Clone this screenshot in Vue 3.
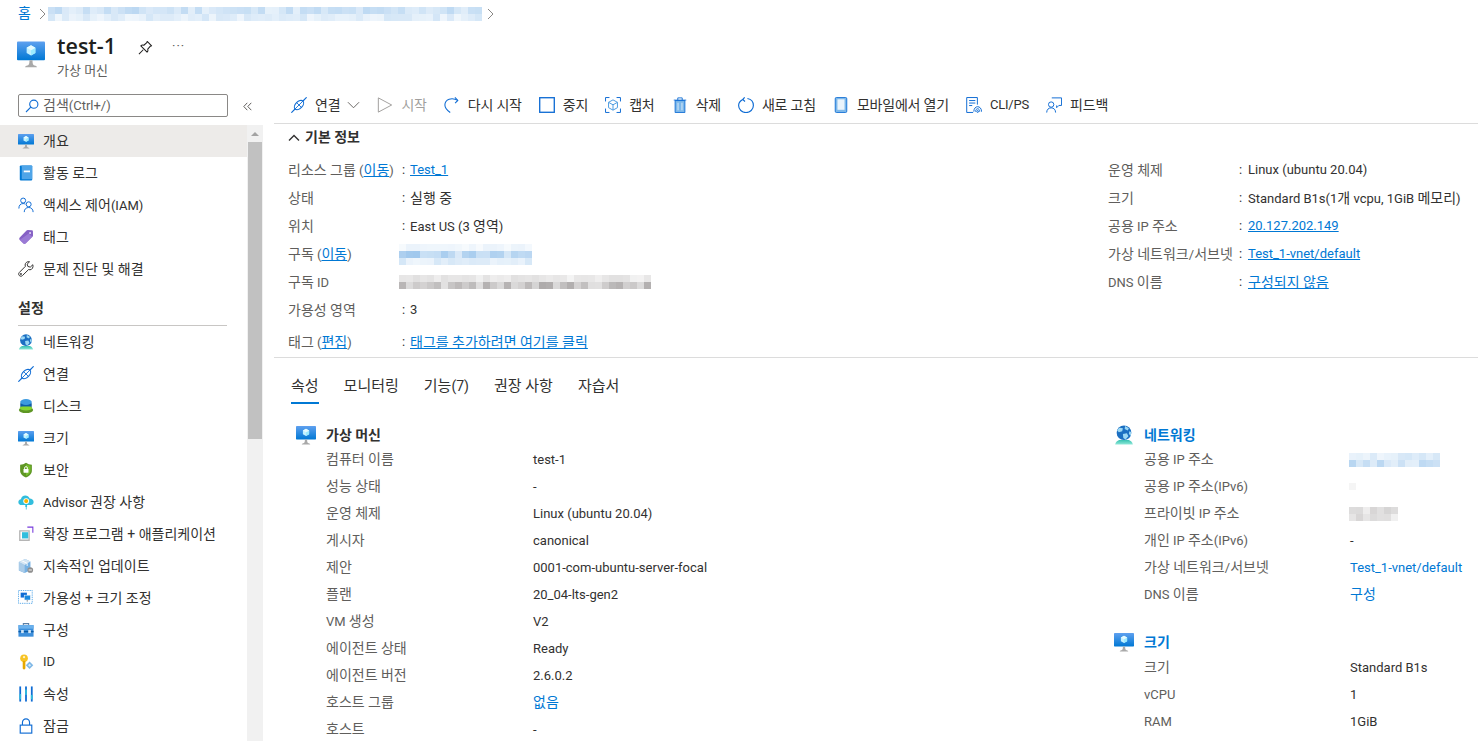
<script setup>
import { h } from 'vue'

function build(seed, cols, rows, rgb, strengths) {
  let s = seed
  const cells = []
  for (let r = 0; r < rows; r++) {
    for (let c = 0; c < cols; c++) {
      s = (s * 9301 + 49297) % 233280
      const a = strengths[r] * (0.35 + 0.65 * (s / 233280))
      cells.push(`rgba(${rgb},${a.toFixed(2)})`)
    }
  }
  return { cols, cells }
}

const Mosaic = (props) =>
  h('span', { class: 'mosaic', style: { gridTemplateColumns: `repeat(${props.data.cols}, 7px)` } },
    props.data.cells.map((c) => h('i', { style: { background: c } })))
Mosaic.props = ['data']

// Hangul runs are set a little larger than Latin, as the original UI font pairing does.
const T = (props) =>
  String(props.s)
    .split(/([가-힣]+(?:(?: | \+ )[가-힣]+)*)/)
    .map((x, i) => (i % 2 ? h('span', { class: 'ko' }, x) : x))
T.props = ['s']

const blue = '100,165,225'
const grey = '120,115,115'
const mCrumb = build(11, 62, 2, blue, [0.44, 0.28])
const mSub = build(23, 19, 3, blue, [0.14, 0.62, 0.28])
const mSubId = build(37, 36, 2, grey, [0.22, 0.6])
const mPub = build(51, 13, 2, blue, [0.28, 0.48])
const mV6 = build(3, 1, 1, grey, [0.12])
const mPriv = build(61, 7, 2, grey, [0.32, 0.3])

const navTop = [
  { t: '개요', i: 'vm', active: true },
  { t: '활동 로그', i: 'log' },
  { t: '액세스 제어(IAM)', i: 'iam' },
  { t: '태그', i: 'tag' },
  { t: '문제 진단 및 해결', i: 'wrench' },
]
const navSet = [
  { t: '네트워킹', i: 'net' },
  { t: '연결', i: 'plug' },
  { t: '디스크', i: 'disk' },
  { t: '크기', i: 'vm' },
  { t: '보안', i: 'shield' },
  { t: 'Advisor 권장 사항', i: 'advisor' },
  { t: '확장 프로그램 + 애플리케이션', i: 'ext' },
  { t: '지속적인 업데이트', i: 'update' },
  { t: '가용성 + 크기 조정', i: 'scale' },
  { t: '구성', i: 'config' },
  { t: 'ID', i: 'id' },
  { t: '속성', i: 'props' },
  { t: '잠금', i: 'lock' },
]
const tools = [
  { t: '연결', i: 'plug', chev: true },
  { t: '시작', i: 'play', off: true },
  { t: '다시 시작', i: 'restart' },
  { t: '중지', i: 'stop' },
  { t: '캡처', i: 'capture' },
  { t: '삭제', i: 'trash' },
  { t: '새로 고침', i: 'refresh' },
  { t: '모바일에서 열기', i: 'mobile' },
  { t: 'CLI/PS', i: 'cli' },
  { t: '피드백', i: 'feedback' },
]
const essRight = [
  { k: '운영 체제', v: 'Linux (ubuntu 20.04)' },
  { k: '크기', v: 'Standard B1s(1개 vcpu, 1GiB 메모리)' },
  { k: '공용 IP 주소', v: '20.127.202.149', link: true },
  { k: '가상 네트워크/서브넷', v: 'Test_1-vnet/default', link: true },
  { k: 'DNS 이름', v: '구성되지 않음', link: true },
]
const tabs = ['속성', '모니터링', '기능(7)', '권장 사항', '자습서']
const vmProps = [
  ['컴퓨터 이름', 'test-1'],
  ['성능 상태', '-'],
  ['운영 체제', 'Linux (ubuntu 20.04)'],
  ['게시자', 'canonical'],
  ['제안', '0001-com-ubuntu-server-focal'],
  ['플랜', '20_04-lts-gen2'],
  ['VM 생성', 'V2'],
  ['에이전트 상태', 'Ready'],
  ['에이전트 버전', '2.6.0.2'],
  ['호스트 그룹', '없음', true],
  ['호스트', '-'],
]
const sizeProps = [
  ['크기', 'Standard B1s'],
  ['vCPU', '1'],
  ['RAM', '1GiB'],
]
</script>

<template>
  <div class="page">
    <svg class="defs" width="0" height="0">
      <defs>
        <linearGradient id="g-vm" x1="0" y1="0" x2="0" y2="1"><stop offset="0" stop-color="#5ea0ef" /><stop offset="1" stop-color="#0078d4" /></linearGradient>
        <linearGradient id="g-net" x1="0" y1="0" x2="0" y2="1"><stop offset="0" stop-color="#37c2b1" /><stop offset="1" stop-color="#8fe8d8" /></linearGradient>
        <symbol id="i-vm" viewBox="0 0 18 18">
          <rect x="0" y="1" width="18" height="12" rx=".6" fill="url(#g-vm)" />
          <path d="M11.900 16.600c-1.800-.3-1.900-1.500-1.900-3.600H8c0 2.100-.1 3.300-1.900 3.600a1 1 0 0 0-.9.9h7.600a1 1 0 0 0-.9-.9z" fill="#a9a9a9" />
          <path d="M9 3.400l2.800 1.600v3.300L9 9.900 6.200 8.300V5z" fill="#c3f1ff" />
          <path d="M9 6.600l2.800-1.600v3.300L9 9.900z" fill="#9cebff" />
          <path d="M9 6.600L6.200 5 9 3.400 11.800 5z" fill="#e6fbff" />
        </symbol>
        <symbol id="i-log" viewBox="0 0 18 18">
          <rect x="2" y="0.500" width="14" height="17" rx="1.200" fill="#0078d4" />
          <rect x="4.200" y="0.500" width="11.800" height="15.400" rx=".8" fill="#50a5e8" />
          <rect x="6.500" y="6.200" width="7" height="2" fill="#fff" />
        </symbol>
        <symbol id="i-iam" viewBox="0 0 18 18" fill="none" stroke="#0f6cd4" stroke-width="1.100">
          <circle cx="5.800" cy="4" r="2.800" />
          <path d="M1 13c0-3.600 1.600-5.600 4.800-5.600 1 0 1.800.2 2.500.6" />
          <circle cx="12" cy="8.200" r="2.800" />
          <path d="M7 17c0-3.200 2-5.200 5-5.200s5 2 5 5.200" />
        </symbol>
        <symbol id="i-tag" viewBox="0 0 18 18">
          <path d="M2 9.500L9.600 1.800c.4-.4.9-.6 1.400-.6l4.400.1c.8 0 1.400.6 1.400 1.400l.1 4.600c0 .5-.2 1-.6 1.400L8.600 16.400c-.8.7-1.900.7-2.600 0L2 12.300c-.8-.8-.8-2 0-2.800z" fill="#8661c5" />
          <path d="M2 12.300l4 4.100c.7.7 1.800.7 2.600 0l7.400-7.600L12 5 2 12.300z" fill="#a98ae0" opacity=".6" />
          <circle cx="13.600" cy="4.400" r="1.100" fill="#e6dcf7" />
        </symbol>
        <symbol id="i-wrench" viewBox="0 0 18 18" fill="none" stroke="#323130" stroke-width="1.100" stroke-linejoin="round">
          <path d="M16.700 4.200l-2.900 2.700-2.700-.8-.8-2.600L13 .9c-2.500-.7-4.900 1-5 3.500 0 .6.1 1.100.3 1.600L1.500 12.900c-1 1-1 2.500 0 3.500s2.500 1 3.500 0l6.900-6.800c.5.2 1 .3 1.600.3 2.400-.1 4-2.800 3.200-5.700z" />
          <circle cx="3.300" cy="14.600" r=".7" />
        </symbol>
        <symbol id="i-net" viewBox="0 0 18 18">
          <path d="M1 17.500c.6-2.200 2-3.400 3.600-4h8.800c1.600.6 3 1.800 3.600 4z" fill="url(#g-net)" />
          <circle cx="9" cy="7" r="6.600" fill="#1b6fc2" />
          <path d="M5 2.400l3 .6-.6 2.600-3 1-1.600-1.600C3.300 3.800 4 3 5 2.400zM10 1l3.400 2-1 2-2.800-1.400zM8 8l3.600-.6 1.400 2.800-2.600 2.800-2-1.400zM13.800 5.600l1.600.6c.2 1.200 0 2.600-.6 3.600l-1.400-2z" fill="#9cd8f5" />
        </symbol>
        <symbol id="i-plug" viewBox="0 0 18 18" fill="none" stroke="#0f6cd4" stroke-width="1.300" stroke-linecap="round">
          <path d="M.8 17.200l4-4M13.200 4.800l4-4" />
          <ellipse cx="9" cy="9" rx="6.200" ry="3.900" transform="rotate(-45 9 9)" />
          <path d="M6.800 6.800l4.400 4.400M5.500 12.500l7-7" stroke-width="1" />
        </symbol>
        <symbol id="i-disk" viewBox="0 0 18 18">
          <ellipse cx="9" cy="13.500" rx="8" ry="3.500" fill="#5e9624" />
          <path d="M2.600 6h12.800v6H2.600z" fill="#3d6f9e" />
          <ellipse cx="9" cy="11.300" rx="7" ry="2.800" fill="#86d633" />
          <rect x="3" y="5" width="12" height="4.500" fill="#0d5ea8" />
          <ellipse cx="9" cy="4.500" rx="6.500" ry="3.300" fill="#3d9be0" />
        </symbol>
        <symbol id="i-shield" viewBox="0 0 18 18">
          <path d="M9 .8c2 1.400 4 2 6.600 2.200v6.800c0 3.600-3.400 6.300-6.600 7.700-3.200-1.400-6.600-4.100-6.600-7.700V3C5 2.800 7 2.200 9 .8z" fill="#5e9624" />
          <path d="M9 2.400c1.600 1 3.400 1.600 5.200 1.800v5.400c0 2.700-2.600 4.900-5.200 6.100z" fill="#76bc2d" />
          <rect x="6.200" y="7.800" width="5.600" height="4.200" rx=".5" fill="#fff" />
          <path d="M7.400 8V6.800a1.600 1.600 0 0 1 3.200 0V8" fill="none" stroke="#fff" stroke-width="1" />
        </symbol>
        <symbol id="i-advisor" viewBox="0 0 18 18">
          <path d="M14.300 12.500H4c-2 0-3.600-1.400-3.600-3.300 0-1.700 1.200-3 2.900-3.300C3.600 3.500 5.800 1.800 8.200 1.800c2.200 0 4.100 1.300 4.900 3.300 2.400 0 4.500 1.700 4.500 3.900 0 1.900-1.500 3.500-3.300 3.500z" fill="#32bedd" />
          <circle cx="9.200" cy="8" r="3.300" fill="#fff" />
          <circle cx="9.200" cy="8" r="2.300" fill="#f8b400" />
          <path d="M8.200 11.500h2v3h-2zM8.800 14.500h.9v3h-.9z" fill="#32bedd" />
        </symbol>
        <symbol id="i-ext" viewBox="0 0 18 18">
          <path d="M2 5.500h10.500V16H2z" fill="#fff" stroke="#b5b5b5" stroke-width="1.500" />
          <rect x="4.500" y="7" width="7" height="7" fill="#32bedd" />
          <path d="M10.500 1.300h6.200v6.200" fill="none" stroke="#773adc" stroke-width="1.200" />
        </symbol>
        <symbol id="i-update" viewBox="0 0 18 18">
          <path d="M1 4.500L8 1.200l6 2.600v10L7.500 17 1 14z" fill="#76b1e3" />
          <path d="M7.500 7.800V17L1 14V4.500z" fill="#a9cbe8" />
          <path d="M7.500 7.800L14 3.800 8 1.200 1 4.500z" fill="#d6e6f3" />
          <path d="M4 3l6.300 3v3" fill="none" stroke="#fff" stroke-width="1" />
          <circle cx="13.800" cy="13.500" r="3.200" fill="#8f8f8f" />
          <path d="M12 13.500h3.600" stroke="#fff" stroke-width="1" />
        </symbol>
        <symbol id="i-scale" viewBox="0 0 18 18">
          <rect x=".5" y=".5" width="15.500" height="14.500" fill="none" stroke="#50a5e8" stroke-width="1" stroke-dasharray="1.500 1" />
          <rect x="3" y="3" width="7" height="5.500" fill="#0f6cd4" />
          <rect x="7" y="5.800" width="7" height="5.500" fill="#1a8ae0" stroke="#fff" stroke-width=".6" />
          <path d="M9.700 11.300h1.600v1.800H9.700z" fill="#a9a9a9" />
        </symbol>
        <symbol id="i-config" viewBox="0 0 18 18">
          <path d="M6 3.500V1.800h6v1.700" fill="none" stroke="#5b7fa6" stroke-width="1.200" />
          <rect x=".5" y="3.500" width="17" height="13" fill="#3d8fdb" />
          <rect x=".5" y="3.500" width="17" height="4" fill="#6bb1ec" />
          <rect x=".5" y="10" width="17" height="1.600" fill="#0a5aa5" />
          <rect x="3.500" y="9" width="3" height="3.500" fill="#cfe5f7" />
          <rect x="11.500" y="9" width="3" height="3.500" fill="#cfe5f7" />
        </symbol>
        <symbol id="i-id" viewBox="0 0 18 18">
          <circle cx="6.800" cy="4.800" r="4.300" fill="#f7c325" />
          <circle cx="6.800" cy="3.600" r="1.300" fill="#fff3c4" />
          <path d="M5.300 8h3v8.400l-1.500 1.300-1.500-1.300z" fill="#e6a800" />
          <path d="M13 8.500l4.200 4.200-4.200 4.200-4.200-4.200z" fill="#7fb8e6" />
          <path d="M13 11l1.700 1.700-1.700 1.700-1.700-1.700z" fill="#d6eaf9" />
        </symbol>
        <symbol id="i-props" viewBox="0 0 18 18">
          <rect x="1.500" y="0.500" width="2" height="17" fill="#0f6cd4" />
          <rect x="8" y="0.500" width="2" height="17" fill="#0f6cd4" />
          <rect x="14.500" y="0.500" width="2" height="17" fill="#0f6cd4" />
          <rect x="1.500" y="9" width="2" height="6" fill="#32bedd" />
          <rect x="8" y="4" width="2" height="6" fill="#32bedd" />
          <rect x="14.500" y="10" width="2" height="5" fill="#32bedd" />
        </symbol>
        <symbol id="i-lock" viewBox="0 0 18 18" fill="none" stroke="#0f6cd4" stroke-width="1.300">
          <rect x="2.500" y="8" width="13" height="9" />
          <path d="M5 8V5a4 4 0 0 1 8 0v3" />
        </symbol>
        <symbol id="i-play" viewBox="0 0 18 18" fill="none" stroke="#a19f9d" stroke-width="1.100">
          <path d="M1.500 1L16.500 9 1.500 17z" />
        </symbol>
        <symbol id="i-restart" viewBox="0 0 18 18" fill="none" stroke="#0f6cd4" stroke-width="1.200">
          <path d="M7 17.500C3.500 15 1 12 1 9c0-3 2-5.500 4.800-6.500 3-1 6.300-.6 9.700 1.300" />
          <path d="M12.300.5l3.200 3.300-3 3" />
        </symbol>
        <symbol id="i-stop" viewBox="0 0 18 18" fill="none" stroke="#0f6cd4" stroke-width="1.500">
          <rect x=".8" y=".8" width="16.400" height="16.400" />
        </symbol>
        <symbol id="i-capture" viewBox="0 0 18 18" fill="none" stroke="#0f6cd4" stroke-width="1.100">
          <path d="M.6 5V.6h4.400M13 .6h4.400V5M17.400 13v4.400H13M5 17.400H.6V13" />
          <path d="M9 3.200l5 2.800v6l-5 2.800-5-2.800V6zM4 6l5 2.800L14 6M9 8.800v6" stroke="#4a9be0" />
        </symbol>
        <symbol id="i-trash" viewBox="0 0 18 18">
          <path d="M3.500 4h11v13.500h-11z" fill="#7db8ea" stroke="#0f6cd4" stroke-width="1" />
          <path d="M2 3.500h14M6.500 3.500V1h5v2.500" fill="none" stroke="#0f6cd4" stroke-width="1" />
          <path d="M6.800 6.500v8.500M11.200 6.500v8.500" stroke="#fff" stroke-width=".8" />
        </symbol>
        <symbol id="i-refresh" viewBox="0 0 18 18" fill="none" stroke="#0f6cd4" stroke-width="1.300">
          <path d="M5.300 2.800C2.600 4.300.7 6.700.7 9.500.7 14 4.400 17.500 9 17.500s8.300-3.500 8.300-8c0-4-2.900-7.100-6.700-7.800" />
          <path d="M7.500.4L5.300 2.800l2.600 2.200" />
        </symbol>
        <symbol id="i-mobile" viewBox="0 0 18 18">
          <rect x="2.500" y=".5" width="13" height="17" rx="1.500" fill="#7db8ea" stroke="#0f6cd4" stroke-width="1" />
          <rect x="5" y="2.600" width="8" height="11.800" fill="#eaf4fc" />
        </symbol>
        <symbol id="i-cli" viewBox="0 0 18 18" fill="none" stroke="#0f6cd4" stroke-width="1.100">
          <path d="M8 17.400H.8V.6h12v8" />
          <path d="M3.500 4h7M3.500 6.800h7M3.500 9.600h3.500" />
          <path d="M8.800 16.500c0-3.800 2.200-5.600 4.300-5.600s4.400 1.800 4.400 5.600" />
          <path d="M10.800 16.500c0-2 1-3.300 2.300-3.300s2.300 1.300 2.300 3.300" />
          <circle cx="13.100" cy="16.300" r="1" />
        </symbol>
        <symbol id="i-feedback" viewBox="0 0 18 18" fill="none" stroke="#0f6cd4" stroke-width="1.100">
          <circle cx="5.800" cy="8.500" r="3" />
          <path d="M.8 17.500c0-3.200 2-5.300 5-5.300s5 2.100 5 5.300" />
          <path d="M6.500 1h11v8.500h-3l-2.500 2.500v-2.500" />
        </symbol>
      </defs>
    </svg>

    <div class="crumb">
      <a class="home"><T s="홈" /></a>
      <svg class="cr" viewBox="0 0 8 12"><path d="M1 1l5 5-5 5" /></svg>
      <Mosaic :data="mCrumb" />
      <svg class="cr cr2" viewBox="0 0 8 12"><path d="M1 1l5 5-5 5" /></svg>
    </div>

    <header class="head">
      <svg class="head-icon"><use href="#i-vm" /></svg>
      <div class="head-text">
        <div class="head-title">
          <h1>test-1</h1>
          <svg class="pin" viewBox="0 0 16 16" fill="none" stroke="#201f1e" stroke-width="1.100" stroke-linejoin="round">
            <path d="M1 15l4.600-4.600M9.800 1.500l4.700 4.700-1.300.4-2.800 3.200c.5 1.200.2 2.400-.7 3.200L3 6.300c.8-.9 2-1.200 3.200-.7l3.200-2.800z" />
          </svg>
          <span class="more">···</span>
        </div>
        <div class="head-sub"><T s="가상 머신" /></div>
      </div>
    </header>

    <div class="body">
      <aside class="side">
        <div class="search-row">
          <div class="search">
            <svg class="search-i" viewBox="0 0 14 14" fill="none" stroke="#0f6cd4" stroke-width="1.100"><circle cx="8.800" cy="5.200" r="4.100" /><path d="M5.800 8.200L1 13" /></svg>
            <span><T s="검색(Ctrl+/)" /></span>
          </div>
          <svg class="collapse" viewBox="0 0 9 9" fill="none" stroke="#605e5c" stroke-width="1"><path d="M4.300.8L.8 4.500l3.500 3.700M8.300.8L4.800 4.500l3.500 3.700" /></svg>
        </div>
        <div class="nav-wrap">
          <nav class="nav">
            <a v-for="n in navTop" :key="n.t" class="nav-item" :class="{ active: n.active }">
              <svg class="nav-i"><use :href="'#i-' + n.i" /></svg><span><T :s="n.t" /></span>
            </a>
            <div class="nav-group"><T s="설정" /></div>
            <a v-for="n in navSet" :key="n.t" class="nav-item">
              <svg class="nav-i"><use :href="'#i-' + n.i" /></svg><span><T :s="n.t" /></span>
            </a>
          </nav>
          <div class="scroll">
            <div class="scroll-up"><b></b></div>
            <div class="scroll-thumb"></div>
          </div>
        </div>
      </aside>

      <main class="main">
        <div class="toolbar">
          <div v-for="b in tools" :key="b.t" class="tool" :class="{ off: b.off }">
            <svg class="tool-i"><use :href="'#i-' + b.i" /></svg>
            <span><T :s="b.t" /></span>
            <svg v-if="b.chev" class="chev" viewBox="0 0 14 8" fill="none" stroke="#605e5c" stroke-width="1"><path d="M1 1l6 6 6-6" /></svg>
          </div>
        </div>

        <section class="ess">
          <div class="ess-head">
            <svg viewBox="0 0 12 8" fill="none" stroke="#323130" stroke-width="1.400"><path d="M1 6.500l5-5 5 5" /></svg>
            <span><T s="기본 정보" /></span>
          </div>
          <div class="ess-cols">
            <div class="ess-col ess-left">
              <div class="erow"><span class="ek"><T s="리소스 그룹" /> (<a><T s="이동" /></a>)</span><span class="ec">:</span><a class="ev">Test_1</a></div>
              <div class="erow"><span class="ek"><T s="상태" /></span><span class="ec">:</span><span class="ev"><T s="실행 중" /></span></div>
              <div class="erow"><span class="ek"><T s="위치" /></span><span class="ec">:</span><span class="ev"><T s="East US (3 영역)" /></span></div>
              <div class="erow"><span class="ek"><T s="구독" /> (<a><T s="이동" /></a>)</span><span class="ec blur-gap"><Mosaic :data="mSub" /></span></div>
              <div class="erow"><span class="ek"><T s="구독 ID" /></span><span class="ec blur-gap"><Mosaic :data="mSubId" /></span></div>
              <div class="erow"><span class="ek"><T s="가용성 영역" /></span><span class="ec">:</span><span class="ev">3</span></div>
            </div>
            <div class="ess-col ess-right">
              <div v-for="r in essRight" :key="r.k" class="erow">
                <span class="ek"><T :s="r.k" /></span><span class="ec">:</span>
                <a v-if="r.link" class="ev"><T :s="r.v" /></a><span v-else class="ev"><T :s="r.v" /></span>
              </div>
            </div>
          </div>
          <div class="erow etags"><span class="ek"><T s="태그" /> (<a><T s="편집" /></a>)</span><span class="ec">:</span><a class="ev"><T s="태그를 추가하려면 여기를 클릭" /></a></div>
        </section>

        <div class="tabs">
          <span v-for="(t, i) in tabs" :key="t" class="tab" :class="{ on: i === 0 }"><T :s="t" /></span>
        </div>

        <div class="props">
          <div class="pcol pleft">
            <div class="phead"><svg class="pi"><use href="#i-vm" /></svg><span><T s="가상 머신" /></span></div>
            <div v-for="p in vmProps" :key="p[0]" class="prow">
              <span class="pk"><T :s="p[0]" /></span><a v-if="p[2]" class="pv plink"><T :s="p[1]" /></a><span v-else class="pv">{{ p[1] }}</span>
            </div>
          </div>
          <div class="pcol pright">
            <div class="phead"><svg class="pi"><use href="#i-net" /></svg><a><T s="네트워킹" /></a></div>
            <div class="prow"><span class="pk"><T s="공용 IP 주소" /></span><span class="pv blur-v"><Mosaic :data="mPub" /></span></div>
            <div class="prow"><span class="pk"><T s="공용 IP 주소(IPv6)" /></span><span class="pv blur-v"><Mosaic :data="mV6" /></span></div>
            <div class="prow"><span class="pk"><T s="프라이빗 IP 주소" /></span><span class="pv blur-v"><Mosaic :data="mPriv" /></span></div>
            <div class="prow"><span class="pk"><T s="개인 IP 주소(IPv6)" /></span><span class="pv">-</span></div>
            <div class="prow"><span class="pk"><T s="가상 네트워크/서브넷" /></span><a class="pv plink">Test_1-vnet/default</a></div>
            <div class="prow"><span class="pk"><T s="DNS 이름" /></span><a class="pv plink"><T s="구성" /></a></div>
            <div class="phead phead2"><svg class="pi"><use href="#i-vm" /></svg><a><T s="크기" /></a></div>
            <div v-for="p in sizeProps" :key="p[0]" class="prow">
              <span class="pk"><T :s="p[0]" /></span><span class="pv">{{ p[1] }}</span>
            </div>
          </div>
        </div>
      </main>
    </div>
  </div>
</template>

<style scoped>
.page {
  width: 1478px;
  height: 741px;
  overflow: hidden;
  background: #fff;
  color: #323130;
  font: 13px/18px Roboto, "Noto Sans CJK KR", sans-serif;
}
.defs { display: block; }
a { color: #0078d4; }

.crumb { height: 27px; padding-left: 18px; display: flex; align-items: center; gap: 1px; }
.home { color: #0078d4; margin-right: 7px; }
.cr { width: 8px; height: 12px; fill: none; stroke: #8a8886; stroke-width: 1; }
.cr2 { margin-left: 4px; }

.head { height: 63px; padding-left: 17px; display: flex; }
.head-icon { width: 28px; height: 28px; margin-top: 13px; }
.head-text { margin-left: 12px; }
.head-title { display: flex; align-items: center; height: 38px; }
.head-title h1 { margin: 0; font: 600 21.500px/38px "Open Sans", sans-serif; width: 81px; color: #201f1e; }
.pin { width: 15px; height: 15px; margin-top: 2px; }
.more { margin-left: 19px; font-size: 13px; color: #605e5c; letter-spacing: 1px; }
.head-sub { font-size: 12px; line-height: 16px; color: #605e5c; margin-top: -2px; }
.head-sub :deep(.ko) { font-size: 13px; }

.body { display: flex; }
.side { width: 263px; flex: none; }
.search-row { height: 35px; padding: 4px 0 0 18px; display: flex; align-items: flex-start; box-sizing: border-box; }
.search {
  width: 210px;
  height: 23px;
  box-sizing: border-box;
  border: 1px solid #8a8886;
  border-radius: 2px;
  display: flex;
  align-items: center;
  padding-left: 6px;
  gap: 4px;
  color: #605e5c;
}
.search-i { width: 14px; height: 14px; }
.collapse { width: 9px; height: 9px; margin: 8px 0 0 15px; }

.nav-wrap { display: flex; height: 616px; overflow: hidden; }
.nav { width: 247px; flex: none; }
.nav-item { height: 32px; display: flex; align-items: center; padding-left: 18px; color: #323130; }
.nav-item.active { background: #edebe9; }
.nav-i { width: 16px; height: 16px; margin-right: 9px; flex: none; }
.nav-group {
  height: 34px;
  margin: 7px 20px 0 18px;
  padding-top: 6px;
  box-sizing: border-box;
  font-weight: 600;
  line-height: 20px;
  border-bottom: 1px solid #c8c6c4;
}
.scroll { width: 16px; background: #f1f1f1; }
.scroll-up { height: 17px; display: flex; align-items: center; justify-content: center; }
.scroll-up b { border: 4px solid transparent; border-top: 0; border-bottom: 4px solid #a3a3a3; }
.scroll-thumb { width: 14px; height: 297px; margin-left: 1px; background: #c1c1c1; }

.main { flex: 1; min-width: 0; margin-left: 11px; }
.toolbar {
  height: 34px;
  box-sizing: border-box;
  border-bottom: 1px solid #dcdcdc;
  display: flex;
  align-items: flex-start;
  gap: 17px;
  padding: 6px 0 0 17px;
}
.tool { display: flex; align-items: center; height: 18px; white-space: nowrap; letter-spacing: -.2px; }
.tool.off { color: #a19f9d; }
.tool-i { width: 16px; height: 16px; margin-right: 8px; flex: none; }
.chev { width: 13px; height: 8px; margin-left: 7px; }

.ess { border-bottom: 1px solid #dcdcdc; height: 234px; box-sizing: border-box; padding-left: 14px; }
.ess-head { height: 27px; display: flex; align-items: center; gap: 5px; font-weight: 600; color: #323130; }
.ess-head svg { width: 12px; height: 8px; }
.ess-cols { display: flex; margin-top: 5px; }
.ess-left { width: 820px; }
.erow { height: 28px; display: flex; align-items: center; }
.ek { color: #605e5c; white-space: nowrap; }
.ess-left .ek, .etags .ek { width: 114px; }
.ess-right .ek { width: 131px; }
.ec { width: 8px; flex: none; }
.ess-right .ec { width: 9px; }
.ev { white-space: nowrap; }
a.ev, .ek a { text-decoration: underline; }
.blur-gap { width: auto; margin-left: -3px; display: flex; }
.etags { margin-top: 4px; }

.tabs { padding: 19px 0 0 17px; display: flex; gap: 25px; font-size: 14px; }
.tabs :deep(.ko) { font-size: 15px; }
.tab { height: 27px; box-sizing: border-box; }
.tab.on { border-bottom: 2px solid #0078d4; }

.props { display: flex; margin-top: 21px; }
.pcol { flex: none; }
.pleft { width: 818px; padding-left: 22px; }
.pright { width: 350px; }
.phead { display: flex; align-items: center; height: 20px; font-weight: 600; margin-bottom: 1px; }
.phead2 { margin-top: 24px; margin-bottom: 2px; }
.pi { width: 20px; height: 20px; margin-right: 10px; flex: none; }
.prow { height: 27px; display: flex; align-items: center; padding-left: 30px; white-space: nowrap; }
.pk { color: #605e5c; flex: none; }
.pleft .pk { width: 207px; }
.pright .pk { width: 206px; }
.plink { color: #0078d4; }
.blur-v { display: flex; margin-left: -1px; }
</style>

<style>
html, body { margin: 0; }
.mosaic { display: inline-grid; flex: none; }
.mosaic i { display: block; height: 7px; }
.ko { font-size: 14px; }
</style>
